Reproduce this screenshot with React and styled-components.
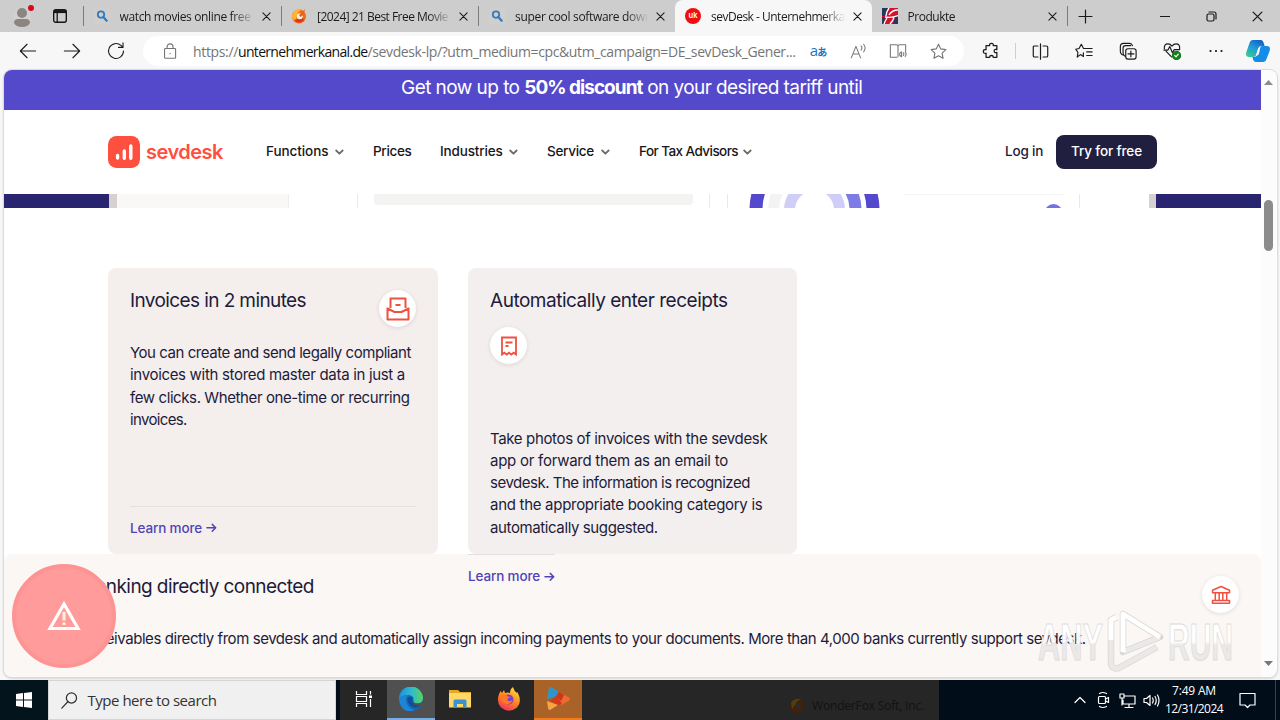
import React from 'react';
import styled, { createGlobalStyle } from 'styled-components';

const GlobalStyle = createGlobalStyle`
  * {
    box-sizing: border-box;
  }

  body {
    margin: 0;
    overflow: hidden;
    background: #f7f7f7;
  }

  svg {
    display: block;
    flex: none;
  }
`;

const ui = "'Open Sans', 'Noto Sans', sans-serif";
const web = "'Inter', 'Liberation Sans', sans-serif";

const Screen = styled.div`
  position: relative;
  display: flex;
  flex-direction: column;
  width: 1280px;
  height: 720px;
  overflow: hidden;
  background: #f7f7f7;
`;

/* every label carries its own tracking */
const Text = styled.span`
  letter-spacing: ${p => p.$track || 0}px;
  white-space: pre;
`;

/* ---------- browser ---------- */

const TabBar = styled.div`
  display: flex;
  height: 32px;
  background: #cdcdcd;
  font: 12px/31px ${ui};
  color: #1b1b1b;
`;

const TabTools = styled.div`
  display: flex;
  align-items: center;
  gap: 17px;
  width: 83px;
  padding-left: 13px;
`;

const Tab = styled.div`
  display: flex;
  align-items: center;
  width: ${p => p.$width || 197}px;
  padding: 0 10px 0 ${p => p.$left || 10}px;
  border-radius: ${p => (p.$active ? '8px 8px 0 0' : 0)};
  background: ${p => (p.$active ? '#f7f7f7' : 'transparent')};
`;

const TabTitle = styled.div`
  flex: 1;
  height: 31px;
  margin: 0 9px 0 10px;
  overflow: hidden;
  mask-image: linear-gradient(90deg, #000 84%, transparent 101%);
`;

const Divider = styled.div`
  align-self: center;
  width: 1px;
  height: ${p => p.$height || 20}px;
  margin: 0 ${p => p.$gap || 0}px;
  background: ${p => p.$color || '#7b7b7b'};
`;

const NewTab = styled.div`
  display: flex;
  align-items: center;
  width: 74px;
  padding-left: 10px;
`;

const WindowButton = styled.div`
  display: flex;
  align-items: center;
  justify-content: center;
  width: 46px;
`;

const Toolbar = styled.div`
  display: flex;
  align-items: center;
  height: 38px;
  padding-left: 6px;
`;

const ToolButton = styled.div`
  flex: none;
  display: flex;
  align-items: center;
  justify-content: center;
  width: ${p => p.$width || 44}px;
  height: 30px;
  color: ${p => p.$color || '#1b1b1b'};
`;

const AddressBar = styled.div`
  flex: none;
  display: flex;
  align-items: center;
  width: 821px;
  height: 30px;
  margin: 0 5px;
  padding: 0 6px 0 19px;
  border-radius: 15px;
  background: #fff;
  font: 14px/29px ${ui};
  color: #757575;
`;

const Url = styled.div`
  flex: 1;
  display: flex;
  margin-left: 14px;
  white-space: pre;
`;

const Host = styled(Text)`
  color: #111;
`;

const Translate = styled.span`
  font: 15px/20px ${ui};
  letter-spacing: -1px;
  color: #1b76c8;

  small {
    font: bold 10px/20px 'Noto Sans CJK JP', sans-serif;
  }
`;

const Viewport = styled.div`
  display: flex;
  width: 1273px;
  height: 607px;
  margin-left: 4px;
  overflow: hidden;
  border-radius: 8px;
  background: #fff;
  box-shadow: 0 0 0 1px #dcdcdc, 0 1px 3px rgba(0, 0, 0, 0.25);
`;

const Scrollbar = styled.div`
  display: flex;
  flex-direction: column;
  align-items: center;
  width: 15px;
  padding: 10px 0 11px;
  background: #fcfcfc;
`;

const Thumb = styled.div`
  width: 9px;
  height: 51px;
  margin: 115px 0 auto;
  border-radius: 5px;
  background: #8b8b8b;
`;

/* ---------- web page ---------- */

const Page = styled.div`
  width: 1257px;
  font-family: ${web};
  color: #1d1b3a;
`;

const Promo = styled.div`
  height: 40px;
  padding-left: 397px;
  background: #5549cb;
  color: #fff;
  font-size: 19px;
  line-height: 36px;
  white-space: pre;
`;

const Header = styled.header`
  display: flex;
  align-items: center;
  height: 84px;
  padding: 0 104px;
  font-size: 13.5px;
  font-weight: 500;
  line-height: 18px;
  color: #17161c;
`;

const Brand = styled.div`
  display: flex;
  align-items: center;
  gap: 6px;
  width: 158px;
  font-size: 20px;
  font-weight: 600;
  line-height: 30px;
  color: #ff4f3f;
`;

const Menu = styled.nav`
  display: flex;
  gap: 29.5px;
  margin-bottom: 2px;
`;

const MenuItem = styled.div`
  display: flex;
  align-items: center;
  justify-content: space-between;
  width: ${p => p.$width}px;
`;

const Login = styled.div`
  width: 51px;
  margin: 0 0 2px auto;
  color: #1d1b3a;
`;

const TryButton = styled.div`
  width: 101px;
  height: 34px;
  padding-left: 15px;
  border-radius: 8px;
  background: #211f40;
  color: #fff;
  line-height: 33px;
`;

const Hero = styled.div`
  display: flex;
  height: 14px;
  background: #28246f;
`;

const HeroSpace = styled.div`
  width: 105px;
`;

const HeroEdge = styled.div`
  width: ${p => p.$width}px;
  background: #d6d0d1;
`;

const HeroSide = styled.div`
  width: 172px;
  border-right: 1px solid #eee;
  background: #faf7f7;
`;

const HeroPanel = styled.div`
  width: ${p => p.$width}px;
  padding-left: ${p => p.$pad || 0}px;
  border-right: 1px solid ${p => (p.$open ? '#fff' : '#e9e9ec')};
  background: #fff;
`;

const HeroBar = styled.div`
  width: 319px;
  height: 11px;
  border-radius: 0 0 4px 4px;
  background: #f3f3f2;
`;

const Cards = styled.div`
  position: relative;
  z-index: 1;
  display: flex;
  gap: 30px;
  height: 286px;
  margin: 60px 0 0 104px;
`;

const Column = styled.div`
  width: ${p => p.$width}px;
`;

const Card = styled.div`
  display: flex;
  flex-direction: column;
  height: 286px;
  padding: 22px 22px 17.5px;
  border-radius: 8px;
  background: ${p => p.$bg};
`;

const CardHead = styled.div`
  flex: none;
  display: flex;
  flex-wrap: wrap;
  align-content: flex-start;
  justify-content: space-between;
  row-gap: 15px;
  height: ${p => p.$height}px;
`;

const Title = styled.h3`
  width: ${p => p.$width || 'auto'};
  margin: 0;
  font-size: 19px;
  font-weight: 400;
  line-height: 22px;
`;

const Badge = styled.div`
  display: flex;
  align-items: center;
  justify-content: center;
  width: 37px;
  height: 37px;
  border-radius: 50%;
  background: #fff;
  color: #f0503f;
  box-shadow: 0 1px 4px rgba(70, 30, 30, 0.12);
`;

const Copy = styled.p`
  display: flex;
  flex-direction: column;
  margin: 0;
  font-size: 15px;
  line-height: 22.3px;
`;

const More = styled.a`
  display: flex;
  align-items: center;
  gap: 3.5px;
  width: ${p => p.$width || 'auto'};
  margin-top: auto;
  padding-top: 12px;
  border-top: 1px solid #e5dfdf;
  font-size: 13.5px;
  font-weight: 500;
  line-height: 18px;
  color: #5044b8;
`;

const Banking = styled.section`
  display: flex;
  justify-content: space-between;
  height: 123px;
  padding: 22px;
  border-radius: 8px 8px 0 0;
  background: #faf7f5;
`;

const BankCopy = styled(Copy)`
  margin-top: 30px;
`;

/* ---------- floating pieces ---------- */

const Alert = styled.div`
  position: absolute;
  z-index: 2;
  left: 12px;
  top: 564px;
  display: flex;
  align-items: center;
  justify-content: center;
  width: 104px;
  height: 104px;
  border: 4px solid #fd9393;
  border-radius: 50%;
  background: #ff9b9b;
`;

const Watermark = styled.div`
  position: absolute;
  z-index: 2;
  left: 1034px;
  top: 606px;
`;

/* ---------- taskbar ---------- */

const Taskbar = styled.div`
  display: flex;
  height: 40px;
  margin-top: 3px;
  background: #020d1a;
  font-family: ${ui};
`;

const Start = styled.div`
  display: flex;
  align-items: center;
  justify-content: center;
  width: 48px;
  background: #03141c;
`;

const Search = styled.div`
  display: flex;
  align-items: center;
  gap: 9.5px;
  width: 288px;
  margin-right: 4px;
  padding-left: 12px;
  border: 1px solid #d5d5d5;
  background: #f0f0f0;
  color: #333;
  font-size: 15px;
  line-height: 36px;
`;

const Apps = styled.div`
  display: flex;
  width: 599px;
  background: #262626;
`;

const TaskButton = styled.div`
  display: flex;
  align-items: center;
  justify-content: center;
  width: ${p => p.$width || 49}px;
  border-bottom: 2px solid ${p => p.$line || 'transparent'};
  background: ${p => p.$bg || 'transparent'};
`;

const Ghost = styled.div`
  display: flex;
  align-items: center;
  gap: 7px;
  margin: 12px 15px 0 auto;
  font-size: 12px;
  line-height: 28px;
  color: #121212;
`;

const Tray = styled.div`
  flex: 1;
  display: flex;
  align-items: center;
  padding-right: 4px;
  color: #fff;
`;

const TrayIcons = styled.div`
  display: flex;
  align-items: center;
  gap: 7px;
  margin: 0 -1px 0 auto;
`;

const Clock = styled.div`
  display: flex;
  flex-direction: column;
  align-items: center;
  width: 70px;
  font-size: 12px;
  line-height: 18px;
`;

const Notify = styled.div`
  display: flex;
  justify-content: center;
  width: 36px;
  margin-right: 10px;
`;

/* ---------- icons ---------- */

const Icon = ({ size = 18, w = 1.2, children, box = 20 }) => (
  <svg
    width={size}
    height={size}
    viewBox={`0 0 ${box} ${box}`}
    fill="none"
    stroke="currentColor"
    strokeWidth={w}
    strokeLinecap="round"
    strokeLinejoin="round"
  >
    {children}
  </svg>
);

const Cross = ({ size = 9 }) => (
  <Icon size={size} box={10} w={1.2}>
    <path d="M1 1l8 8M9 1l-8 8" />
  </Icon>
);

const Magnifier = () => (
  <svg width="16" height="16" viewBox="0 0 16 16" fill="none">
    <rect width="16" height="16" fill="#d1cecb" />
    <circle cx="7" cy="6.6" r="3.2" stroke="#2f7cc4" strokeWidth="1.8" />
    <path d="M9.3 9l3.4 3.8" stroke="#2f7cc4" strokeWidth="2.2" strokeLinecap="round" />
  </svg>
);

const FoxRing = () => (
  <svg width="16" height="16" viewBox="0 0 16 16">
    <circle cx="8" cy="8.5" r="7" fill="#f26a1b" />
    <path d="M2 5Q5 0 12 1Q7 3 6 7Q4 11 8 14Q1 13 1 8Z" fill="#ffb52e" />
    <path d="M3 12Q8 17 13 12L11 9L6 11Z" fill="#d9371c" />
    <circle cx="8.8" cy="8.2" r="3" fill="#fff2dd" />
    <path d="M8 7l6-6-1.5 6-3 2z" fill="#e8641c" />
  </svg>
);

const UkIcon = () => (
  <svg width="16" height="16" viewBox="0 0 16 16">
    <circle cx="8" cy="8" r="8" fill="#ee0f12" />
    <text x="8" y="10.4" fontFamily="Inter" fontWeight="600" fontSize="7.5" fill="#fff" textAnchor="middle">
      uk
    </text>
  </svg>
);

const ProdukteIcon = () => (
  <svg width="16" height="16" viewBox="0 0 16 16">
    <rect width="16" height="16" fill="#d3122d" />
    <path d="M0 0h6L3 8H0z" fill="#23395d" />
    <path d="M0 9h3l-1 7H0zM13 9h3v7h-5z" fill="#23395d" />
    <path d="M7 0Q4 4 4 8M16 2Q10 2 7 7M3 9q7 1 13-1.500M5 10Q3 13 2 16M12 9.500Q11 13 8 16" stroke="#fff" strokeWidth="1.300" fill="none" />
  </svg>
);

const Avatar = () => (
  <svg width="22" height="24" viewBox="0 0 22 24">
    <circle cx="9" cy="12.5" r="9" fill="#d3d1cf" />
    <circle cx="9" cy="9" r="5" fill="#8a8580" />
    <path d="M1 19q0-4 4-4h8q4 0 4 4q-2 4-8 4t-8-4z" fill="#8a8580" />
    <circle cx="18" cy="4" r="3" fill="#d6091b" />
  </svg>
);

const TabActions = () => (
  <svg width="16" height="16" viewBox="0 0 16 16" fill="none" stroke="#161616">
    <rect x="1.7" y="1.7" width="12.6" height="12.6" rx="2" strokeWidth="1.4" />
    <path d="M2 3.6h12" strokeWidth="3" />
    <path d="M5.2 4v10" strokeWidth="1.3" />
  </svg>
);

const Chevron = () => (
  <Icon size={9} box={9} w={1.8}>
    <path d="M1.2 3.500l3.2 3.200L7.600 3.500" stroke="#6c6c6c" />
  </Icon>
);

const Arrow = () => (
  <Icon size={11} box={11} w={1.5}>
    <path d="M1 5.8h8.6M6.2 2.4l3.5 3.4-3.5 3.4" />
  </Icon>
);

const Logo = () => (
  <svg width="32" height="32" viewBox="0 0 32 32">
    <rect width="32" height="32" rx="8.5" fill="#ff4f3f" />
    <path d="M9.600 19.500v2.500M16.300 15V22.300M22.800 10V22.300" stroke="#fff" strokeWidth="3.400" strokeLinecap="round" />
  </svg>
);

const InboxIcon = () => (
  <svg width="24" height="24" viewBox="0 0 24 24" fill="none" stroke="currentColor" strokeWidth="2">
    <path
      d="M4.500 11V1.500h15V11M1.500 10.500v12h21v-12M1.500 11.500l7 3.500h7l7-3.500M9.500 8h5"
      strokeLinejoin="round"
    />
  </svg>
);

const ReceiptIcon = () => (
  <svg width="20" height="22" viewBox="0 0 20 22" fill="none" stroke="currentColor" strokeWidth="1.8">
    <path d="M3 2.500h14v17l-2.300-1.800-2.400 1.800-2.300-1.800-2.300 1.800-2.400-1.800L3 19.500zM6.500 7.500h7M6.500 11h3" />
  </svg>
);

const BankIcon = () => (
  <svg width="20" height="20" viewBox="0 0 20 20" fill="none" stroke="currentColor" strokeWidth="1.5">
    <path
      d="M10 1.500L1.500 5.300v2.500h17V5.300zM4.300 8v7M8.200 8v7M11.800 8v7M15.700 8v7M1.500 18.200h17v-2.700h-17z"
      strokeLinejoin="round"
    />
  </svg>
);

const Donut = () => (
  <svg width="351" height="14" viewBox="728 194 351 14" fill="none">
    <circle cx="814.5" cy="210" r="58.5" stroke="#5448cc" strokeWidth="13" />
    <path d="M773.500 210a41 41 0 0 1 41-41" stroke="#f3f3f3" strokeWidth="11" />
    <path d="M814.500 169a41 41 0 0 1 41 41" stroke="#7d7ce6" strokeWidth="12" />
    <circle cx="814.5" cy="210" r="25" stroke="#cfcef9" strokeWidth="11" />
    <path d="M904 194.500h160" stroke="#f4f4f4" />
    <circle cx="1053.5" cy="213" r="9" fill="#7472df" />
  </svg>
);

const EdgeIcon = () => (
  <svg width="24" height="24" viewBox="0 0 24 24">
    <defs>
      <linearGradient id="edgeTop" x1="0" x2="1">
        <stop offset="0" stopColor="#1f8fd8" />
        <stop offset="0.5" stopColor="#2cb9d2" />
        <stop offset="1" stopColor="#5bd65a" />
      </linearGradient>
    </defs>
    <circle cx="12" cy="12" r="12" fill="#1565b8" />
    <path d="M0 12A12 12 0 0 1 24 11Q24 16.500 18 16.500Q13.500 16 14.500 13Q15 8.500 9.500 8Q3 8 0 12z" fill="url(#edgeTop)" />
    <path d="M0 12Q3 8 9.500 8Q5.500 11 8 17Q10.500 22 16 23Q5 27 1 17Q0 14 0 12z" fill="#1c85d6" />
    <path d="M8.500 11q2-2 5 0q-1 4 1 5.500q3 1.500 8 .5q-3 4-7.500 3.500Q8 18 8.500 11z" fill="#124d97" />
    <path d="M14.500 13q-.6 3.500 4 3.500q3.500 0 5-2.500q-.5 3-2 4q-5 2-7.500-1.500q-1-2 .5-3.500z" fill="#505050" />
  </svg>
);

const FolderIcon = () => (
  <svg width="22" height="20" viewBox="0 0 22 20">
    <path d="M0 1h9l2 2h11v15H0z" fill="#e8a820" />
    <path d="M0 4h22v14.500H0z" fill="#ffd869" />
    <path d="M4.500 19v-7q0-1.500 1.500-1.500h10q1.500 0 1.500 1.500v7h-3.500v-4H8v4z" fill="#3a94d0" />
  </svg>
);

const FirefoxIcon = () => (
  <svg width="24" height="24" viewBox="0 0 24 24">
    <defs>
      <linearGradient id="fire" x1="0.8" y1="0" x2="0.3" y2="1">
        <stop offset="0" stopColor="#ffe03a" />
        <stop offset="0.5" stopColor="#ff8a1f" />
        <stop offset="1" stopColor="#f3305c" />
      </linearGradient>
    </defs>
    <path d="M2 7l1.500-3L5 6l2-3 1 3q3-1 5 0Q13 2 16 0q1 4 4 6l.5-1q5 10-.5 15.500Q12 27 4 20.500-1 15 2 7z" fill="url(#fire)" />
    <circle cx="11.5" cy="12.5" r="5" fill="#7b3fd0" />
    <path d="M4 8q4-2 7 1.500l3 .5q-4 1-3.500 3.500 3 2 5-1-1 5-6 4.500Q4 16 4 8z" fill="#ff7a25" />
  </svg>
);

const PlayAppIcon = () => (
  <svg width="26" height="26" viewBox="0 0 26 26">
    <path d="M4 2q0-2 2-1l7 4-2 6-9 2z" fill="#2f96cc" />
    <path d="M14 6l10 5.500q2 1.500 0 3l-8 5-3-9z" fill="#ee6a30" />
    <path d="M5 15l7-6 5 9-4 1z" fill="#d43a1c" />
    <path d="M2 15l11 4-8 5q-2 0-2-2z" fill="#f8a445" />
    <path d="M14 6l5 3-3 6-4-5z" fill="#c9371c" />
  </svg>
);

const Copilot = () => (
  <svg width="24" height="24" viewBox="0 0 24 24">
    <defs>
      <linearGradient id="copilotA" x1="0" y1="1" x2="0.6" y2="0">
        <stop offset="0" stopColor="#3fd08c" />
        <stop offset="0.6" stopColor="#1e9bd8" />
        <stop offset="1" stopColor="#1567c8" />
      </linearGradient>
    </defs>
    <path d="M7 1h8q2 0 3 4l.6 2h-3q-3 0-4 4l-1.500 5q-.6 2-3 2H3q-4 0-2.600-5L3.500 4Q4.400 1 7 1z" fill="url(#copilotA)" />
    <path d="M17 23H9.500q-2 0-2.600-3L6.500 18H8q3 0 4-4l1.500-5q.6-2 3-2H21q4 0 2.600 5L20.500 20q-1 3-3.500 3z" fill="#168be8" />
    <path d="M14.500 7.500q-1.500 0-2 2l-2.500 7h1q1.500 0 2-2z" fill="#f7f7f7" />
  </svg>
);

const tabs = [
  { icon: <Magnifier />, title: 'watch movies online free', track: -0.36, width: 196.5 },
  { icon: <FoxRing />, title: '[2024] 21 Best Free Movie', track: -0.53, width: 196 },
  { icon: <Magnifier />, title: 'super cool software down', track: -0.32, width: 196, plain: true },
  { icon: <UkIcon />, title: 'sevDesk - Unternehmerka', track: -0.5, width: 197.5, active: true, plain: true },
  { icon: <ProdukteIcon />, title: 'Produkte', track: -0.48, width: 195 }
];

const menu = [
  { label: 'Functions', width: 77.5, track: -0.07, open: true },
  { label: 'Prices', width: 37.5, track: -0.32 },
  { label: 'Industries', width: 77.5, track: -0.16, open: true },
  { label: 'Service', width: 62.5, track: -0.28, open: true },
  { label: 'For Tax Advisors', width: 113, track: -0.56, open: true }
];

const invoiceCopy = [
  ['You can create and send legally compliant', -0.45],
  ['invoices with stored master data in just a', -0.32],
  ['few clicks. Whether one-time or recurring', -0.4],
  ['invoices.', -0.66]
];

const receiptCopy = [
  ['Take photos of invoices with the sevdesk', -0.35],
  ['app or forward them as an email to', -0.26],
  ['sevdesk. The information is recognized', -0.49],
  ['and the appropriate booking category is', -0.29],
  ['automatically suggested.', -0.39]
];

const Lines = ({ lines }) => (
  <Copy>
    {lines.map(([line, track]) => (
      <Text key={line} $track={track}>
        {line}
      </Text>
    ))}
  </Copy>
);

const LearnMore = ({ width }) => (
  <More $width={width}>
    <Text $track={-0.15}>Learn more</Text>
    <Arrow />
  </More>
);

const BrowserTabs = () => (
  <TabBar>
    <TabTools>
      <Avatar />
      <TabActions />
    </TabTools>
    <Divider />
    {tabs.map(({ icon, title, track, width, active, plain }) => (
      <React.Fragment key={title}>
        <Tab $active={active} $width={width} $left={plain ? 10.5 : 9.5}>
          {icon}
          <TabTitle>
            <Text $track={track}>{title}</Text>
          </TabTitle>
          <Cross />
        </Tab>
        {!plain && <Divider />}
      </React.Fragment>
    ))}
    <NewTab>
      <Icon size={15} box={15}>
        <path d="M7.500 1v13M1 7.500h13" />
      </Icon>
    </NewTab>
    <WindowButton>
      <Icon size={10} box={10}>
        <path d="M.5 5.500h9" />
      </Icon>
    </WindowButton>
    <WindowButton>
      <Icon size={11} box={11}>
        <rect x="1" y="3" width="7" height="7" rx="1.5" />
        <path d="M3 1h5q2 0 2 2v5" />
      </Icon>
    </WindowButton>
    <WindowButton>
      <Cross size={11} />
    </WindowButton>
  </TabBar>
);

const BrowserToolbar = () => (
  <Toolbar>
    <ToolButton>
      <Icon>
        <path d="M18.500 10H2M9 2.500L1.500 10 9 17.500" />
      </Icon>
    </ToolButton>
    <ToolButton>
      <Icon>
        <path d="M1.500 10H18M11 2.500l7.500 7.500-7.500 7.500" />
      </Icon>
    </ToolButton>
    <ToolButton>
      <Icon>
        <path d="M18.300 10A8.300 8.300 0 1 1 15.500 3.800L17.500 5.600M17.800 1v5h-5" />
      </Icon>
    </ToolButton>
    <AddressBar>
      <Icon size={17} w={1.3}>
        <rect x="3" y="6.5" width="13" height="11.5" rx="1" />
        <path d="M6 6.500V4.500a3.500 3.500 0 0 1 7 0v2M9.500 12v.6" />
      </Icon>
      <Url>
        <Text $track={-0.34}>https://</Text>
        <Host $track={-0.682}>unternehmerkanal.de</Host>
        <Text $track={-0.39}>/sevdesk-lp/?utm_medium=cpc&amp;utm_campaign=DE_sevDesk_Gener...</Text>
      </Url>
      <ToolButton $width={40}>
        <Translate>
          a<small>あ</small>
        </Translate>
      </ToolButton>
      <ToolButton $width={40} $color="#777">
        <Icon size={17}>
          <path d="M1.500 17.500L7 4l5.500 13.500M3.300 13h7.400M13 3.500q2 2 0 5M16 1.500q3.500 4 0 9" />
        </Icon>
      </ToolButton>
      <ToolButton $width={40} $color="#777">
        <Icon size={18}>
          <path d="M9 17H1.500V3H8q2 0 2 2v11M10 5q0-2 2-2h6.500v7M12 12.500l2-1.500v5.500l-2-1.500zM16 12q1 1.500 0 3M18 11q2 2.500 0 5" />
        </Icon>
      </ToolButton>
      <ToolButton $width={40} $color="#777">
        <Icon size={19}>
          <path d="M10 2.300l2.400 5 5.400.7-4 3.800 1 5.400-4.800-2.600-4.800 2.600 1-5.400-4-3.800 5.400-.7z" />
        </Icon>
      </ToolButton>
    </AddressBar>
    <ToolButton>
      <Icon size={18} w={1.4}>
        <path d="M4.500 4h4q-.5-2.500 2-2.500t2 2.500h4v4.500q-3-1-3 1.500t3 1.500V17h-4q0-2-2-2t-2 2h-4v-4.500Q1.500 13 1.500 10.500t3-2z" />
      </Icon>
    </ToolButton>
    <Divider $height={16} $color="#cfcfcf" $gap={2} />
    <ToolButton>
      <Icon size={17} w={1.4}>
        <path d="M7 3.500H3q-1.500 0-1.500 1.500v10q0 1.500 1.500 1.500h4M13 3.500h4q1.500 0 1.500 1.500v10q0 1.500-1.500 1.500h-4M10 1v18" />
      </Icon>
    </ToolButton>
    <ToolButton>
      <Icon size={18} w={1.3}>
        <path d="M9.300 12v4L6 14l-3.500 2.700.8-5L.8 8l3.700-.8L7 2.500l2.500 4.700h9.500M13 11h6M13 15h6" />
      </Icon>
    </ToolButton>
    <ToolButton>
      <Icon size={18} w={1.3}>
        <path d="M4.500 14.500Q1 13 1.500 9V5q0-3.500 3.500-3.500h7Q14 1.500 15 4M7 16q-2.500-1-2.500-4V7q0-3 3-3H13" />
        <rect x="7.5" y="7.5" width="11.5" height="11.5" rx="2.5" />
        <path d="M13.200 10v6.500M10 13.200h6.500" />
      </Icon>
    </ToolButton>
    <ToolButton>
      <Icon size={18} w={1.3}>
        <path d="M9.500 16.500L3.500 10.500M1.500 7.500Q1 2 5.500 2 8 2 10 4.500 12 2 14.500 2q4.500 0 4 5.500M1 9h4.500l2-4 3 7 2-3.500h6" />
        <circle cx="15" cy="15" r="4.5" fill="#15801b" stroke="#15801b" />
        <path d="M13 15l1.500 1.500 2.500-3" stroke="#fff" />
      </Icon>
    </ToolButton>
    <ToolButton>
      <Icon size={14} box={14} w={2.2}>
        <path d="M1.500 7h.01M7 7h.01M12.500 7h.01" />
      </Icon>
    </ToolButton>
    <ToolButton $width={39}>
      <Copilot />
    </ToolButton>
  </Toolbar>
);

const SiteHeader = () => (
  <Header>
    <Brand>
      <Logo />
      <Text $track={-0.5}>sevdesk</Text>
    </Brand>
    <Menu>
      {menu.map(({ label, width, track, open }) => (
        <MenuItem key={label} $width={width}>
          <Text $track={track}>{label}</Text>
          {open && <Chevron />}
        </MenuItem>
      ))}
    </Menu>
    <Login>
      <Text $track={-0.2}>Log in</Text>
    </Login>
    <TryButton>
      <Text $track={-0.13}>Try for free</Text>
    </TryButton>
  </Header>
);

const HeroStrip = () => (
  <Hero>
    <HeroSpace />
    <HeroEdge $width={8} />
    <HeroSide />
    <HeroPanel $width={69} />
    <HeroPanel $width={352} $pad={16}>
      <HeroBar />
    </HeroPanel>
    <HeroPanel $width={18} />
    <HeroPanel $width={352}>
      <Donut />
    </HeroPanel>
    <HeroPanel $width={69} $open />
    <HeroEdge $width={7} />
  </Hero>
);

const AnyRun = () => (
  <Watermark>
    <svg width="204" height="70" viewBox="1034 606 204 70">
      <defs>
        <linearGradient id="mark" x1="0" y1="0" x2="0" y2="1">
          <stop offset="0.5" stopColor="#fff" stopOpacity="0.95" />
          <stop offset="0.55" stopColor="#e9e7e6" stopOpacity="0.85" />
        </linearGradient>
      </defs>
      <g fill="url(#mark)" stroke="#dedbda" fontFamily="Liberation Sans" fontSize="52" fontWeight="700">
        <text x="1038" y="660" textLength="65" lengthAdjust="spacingAndGlyphs">
          ANY
        </text>
        <text x="1168" y="660" textLength="65" lengthAdjust="spacingAndGlyphs">
          RUN
        </text>
      </g>
      <g fill="none" strokeLinejoin="round">
        <path d="M1123 614v38l37-15z M1117 617l-6 3v42q0 8 8 6l38-21" stroke="#d9d6d5" strokeWidth="6.5" />
        <path d="M1123 652l37-15M1111 640v22q0 8 8 6l38-21" stroke="#ebe9e8" strokeWidth="5" />
        <path d="M1123 652v-38l37 23M1117 617l-6 3v20" stroke="#fff" strokeWidth="5" />
      </g>
    </svg>
  </Watermark>
);

const WindowsTaskbar = () => (
  <Taskbar>
    <Start>
      <svg width="16" height="16" viewBox="0 0 16 16" fill="#fff">
        <path d="M0 2l7-1v6.500H0zM8 .9L16 0v7.500H8zM0 8.500h7V15l-7-1zM8 8.500h8V16l-8-1z" />
      </svg>
    </Start>
    <Search>
      <Icon size={17} w={1.5}>
        <circle cx="12.3" cy="7" r="6" />
        <path d="M8 11.500L1 19" />
      </Icon>
      <Text $track={-0.475}>Type here to search</Text>
    </Search>
    <Apps>
      <TaskButton $width={47}>
        <svg width="24" height="16" viewBox="0 0 24 16" fill="none" stroke="#fff" strokeWidth="1.2">
          <path d="M4.500 0v3.500h10V0M4.500 16v-3.500h10V16M4.500 5.500h10v5h-10zM18.500 0v3.500M18.500 8v8" />
          <path d="M17 4.500h3v2.500h-3z" fill="#fff" stroke="none" />
        </svg>
      </TaskButton>
      <TaskButton $width={48} $bg="#505050" $line="#76aee8">
        <EdgeIcon />
      </TaskButton>
      <TaskButton>
        <FolderIcon />
      </TaskButton>
      <TaskButton $width={50}>
        <FirefoxIcon />
      </TaskButton>
      <TaskButton $width={48} $bg="#a96228" $line="#f47a1c">
        <PlayAppIcon />
      </TaskButton>
      <Ghost>
        <svg width="16" height="16" viewBox="0 0 16 16">
          <circle cx="8" cy="8" r="7" fill="#422009" />
          <path d="M2 5Q5 0 12 1 7 3 6 7L3 11z" fill="#51400f" />
          <circle cx="9" cy="8" r="2.8" fill="#2c2a28" />
        </svg>
        <Text $track={-0.17}>WonderFox Soft, Inc.</Text>
      </Ghost>
    </Apps>
    <Tray>
      <TrayIcons>
        <Icon size={14} box={14}>
          <path d="M2 9.500L7 4.500l5 5" />
        </Icon>
        <Icon size={18} box={18}>
          <rect x="4.5" y="5.5" width="7" height="7" rx="1" />
          <path d="M11.500 8l3-1.500v5l-3-1.500M5.500 2.500q3-2 7 0M5.500 15.500q3 2 7 0" />
        </Icon>
        <Icon size={17} box={17}>
          <path d="M5 4h11v8H4V8M1 2h4v4H1zM10 12v3M6 15.500h8M3 6v7" />
        </Icon>
        <Icon size={17} box={17}>
          <path d="M1 6.500h2.500L7 3.500v10L3.500 10.500H1zM9.500 6q1.500 2.500 0 5M12 4.500q2.500 4 0 8M14.500 3q3 5.500 0 11" />
        </Icon>
      </TrayIcons>
      <Clock>
        <Text $track={-0.18}>7:49 AM</Text>
        <Text $track={-0.57}>12/31/2024</Text>
      </Clock>
      <Notify>
        <Icon size={17} box={17}>
          <path d="M1 1.500h15v11.500h-5L8.500 15.500 6 13H1z" />
        </Icon>
      </Notify>
      <Divider $height={40} $color="#39424c" />
    </Tray>
  </Taskbar>
);

export default function App() {
  return (
    <Screen>
      <GlobalStyle />
      <BrowserTabs />
      <BrowserToolbar />
      <Viewport>
        <Page>
          <Promo>
            <Text $track={-0.55}>Get now up to </Text>
            <Text as="b" $track={-0.98}>50% discount</Text>
            <Text $track={-0.58}> on your desired tariff until</Text>
          </Promo>
          <SiteHeader />
          <HeroStrip />
          <Cards>
            <Column $width={330}>
              <Card $bg="#f4eeed">
                <CardHead $height={52}>
                  <Title>
                    <Text $track={-0.6}>Invoices in 2 minutes</Text>
                  </Title>
                  <Badge>
                    <InboxIcon />
                  </Badge>
                </CardHead>
                <Lines lines={invoiceCopy} />
                <LearnMore />
              </Card>
            </Column>
            <Column $width={329}>
              <Card $bg="#f3efee">
                <CardHead $height={137.5}>
                  <Title $width="100%">
                    <Text $track={-0.48}>Automatically enter receipts</Text>
                  </Title>
                  <Badge>
                    <ReceiptIcon />
                  </Badge>
                </CardHead>
                <Lines lines={receiptCopy} />
              </Card>
              <LearnMore width="87px" />
            </Column>
          </Cards>
          <Banking>
            <div>
              <Title>
                <Text $track={-0.58}>Online banking directly connected</Text>
              </Title>
              <BankCopy>
                <Text $track={-0.437}>
                  Manage receivables directly from sevdesk and automatically assign incoming payments to your documents. More than 4,000 banks currently support sevdesk.
                </Text>
              </BankCopy>
            </div>
            <Badge>
              <BankIcon />
            </Badge>
          </Banking>
        </Page>
        <Scrollbar>
          <svg width="9" height="5" viewBox="0 0 9 5" fill="#8b8b8b">
            <path d="M0 5l4.500-5L9 5z" />
          </svg>
          <Thumb />
          <svg width="9" height="5" viewBox="0 0 9 5" fill="#777">
            <path d="M0 0l4.500 5L9 0z" />
          </svg>
        </Scrollbar>
      </Viewport>
      <WindowsTaskbar />
      <Alert>
        <svg width="36" height="32" viewBox="0 0 36 32" fill="none" stroke="#fff">
          <path d="M18 4L4 28.500h28z" strokeWidth="3.2" />
          <path d="M18 12v8.500M18 22.500v2.500" strokeWidth="3" stroke="#fff3df" />
        </svg>
      </Alert>
      <AnyRun />
    </Screen>
  );
}
